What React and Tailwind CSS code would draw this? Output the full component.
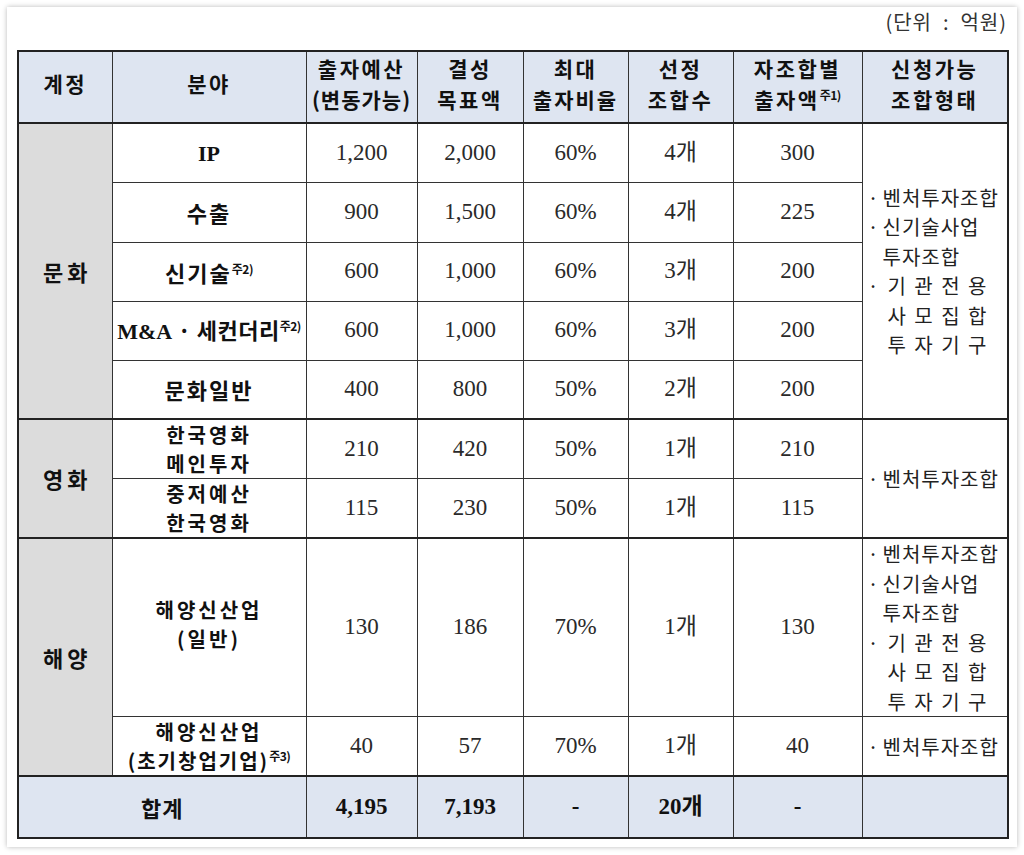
import React from "react";

const SANS = "font-['Noto_Sans_CJK_KR','Noto_Sans',sans-serif]";
const NUM = "font-['Liberation_Serif','Noto_Sans_CJK_KR',serif]";

function Sup({ children }) {
  return (
    <span className="relative -top-[8px] inline-block text-[12px] leading-none font-bold font-['Noto_Sans_CJK_KR',sans-serif] tracking-[-0.5px]">
      {children}
    </span>
  );
}

function Th({ children, className = "" }) {
  return (
    <td
      className={
        "border border-[#333] bg-[#dee5f1] p-0 text-center align-middle text-[21px] leading-[30.5px] font-bold text-[#111] tracking-[2.5px] " +
        SANS +
        " " +
        className
      }
    >
      <div className="pb-[7px]">{children}</div>
    </td>
  );
}

function Cat({ children, rowSpan, top }) {
  return (
    <td
      rowSpan={rowSpan}
      className={
        "border border-[#333] bg-[#dcdcdc] p-0 text-center align-middle text-[22px] font-bold text-[#111] tracking-[4px] " +
        SANS +
        (top ? " border-t-2 border-t-[#222]" : "")
      }
    >
      <span className="pl-[4px]">{children}</span>
    </td>
  );
}

function Label({ children, top }) {
  return (
    <td
      className={
        "border border-[#333] p-0 text-center align-middle text-[22px] leading-[28px] font-bold text-[#111] tracking-[2px] " +
        SANS +
        (top ? " border-t-2 border-t-[#222]" : "")
      }
    >
      {children}
    </td>
  );
}

function Two({ a, b, pb }) {
  return (
    <div className={"text-[20px] leading-[29px] tracking-[3px] " + (pb ? "pb-[8px]" : "")}>
      <div>{a}</div>
      <div>{b}</div>
    </div>
  );
}

function Num({ children, top, bold }) {
  return (
    <td
      className={
        "border border-[#333] p-0 text-center align-middle text-[23px] text-[#2a2a2a] " +
        NUM +
        (bold ? " font-bold text-[#111]" : "") +
        (top ? " border-t-2 border-t-[#222]" : "")
      }
    >
      {children}
    </td>
  );
}

function Line({ bullet, children }) {
  return (
    <div className="flex items-center">
      <span className="w-[15px] shrink-0 text-left tracking-normal">{bullet ? "·" : ""}</span>
      <span>{children}</span>
    </div>
  );
}

function Spaced({ text }) {
  return (
    <div className="flex w-[104px] justify-between pl-[5px] tracking-normal">
      {text.split("").map((c, i) => (
        <span key={i}>{c}</span>
      ))}
    </div>
  );
}

function TypesFull() {
  return (
    <div className="flex flex-col items-start pl-[5px] text-[20px] leading-[29.5px] text-[#222] tracking-[1px]">
      <Line bullet>벤처투자조합</Line>
      <Line bullet>신기술사업</Line>
      <Line>투자조합</Line>
      <div className="flex items-center">
        <span className="w-[15px] shrink-0 text-left">·</span>
        <Spaced text="기관전용" />
      </div>
      <div className="flex items-center">
        <span className="w-[15px] shrink-0" />
        <Spaced text="사모집합" />
      </div>
      <div className="flex items-center">
        <span className="w-[15px] shrink-0" />
        <Spaced text="투자기구" />
      </div>
    </div>
  );
}

function Types({ rowSpan, top, full }) {
  return (
    <td
      rowSpan={rowSpan}
      className={
        "border border-[#333] p-0 text-left align-middle " +
        SANS +
        (top ? " border-t-2 border-t-[#222]" : "")
      }
    >
      {full ? (
        <TypesFull />
      ) : (
        <div className="pl-[5px] text-[20px] leading-[29px] text-[#222] tracking-[1px]">
          <Line bullet>벤처투자조합</Line>
        </div>
      )}
    </td>
  );
}

export default function App() {
  return (
    <div className="h-[855px] w-[1024px] bg-white p-[7px]">
      <div className="h-[840px] w-[1010px] bg-white pl-[10px] pr-[10px] pt-[3px] shadow-[0_0_5px_rgba(0,0,0,0.28)]">
        <div
          className={
            "h-[24px] text-right text-[20px] leading-[24px] text-[#333] tracking-[1px] " + SANS
          }
        >
          (단위{"\u00a0\u00a0"}:{"\u00a0\u00a0"}억원)
        </div>
        <div className="h-[16px]" />
        <table className="w-[990px] table-fixed border-collapse border-2 border-[#222]">
          <colgroup>
            <col className="w-[94px]" />
            <col className="w-[194px]" />
            <col className="w-[111px]" />
            <col className="w-[106px]" />
            <col className="w-[105px]" />
            <col className="w-[105px]" />
            <col className="w-[129px]" />
            <col className="w-[146px]" />
          </colgroup>
          <tbody>
            <tr className="h-[72px]">
              <Th>계정</Th>
              <Th>분야</Th>
              <Th>
                출자예산
                <br />
                <span className="tracking-[1px]">(변동가능)</span>
              </Th>
              <Th>
                결성
                <br />
                목표액
              </Th>
              <Th>
                최대
                <br />
                <span className="tracking-[2px]">출자비율</span>
              </Th>
              <Th>
                선정
                <br />
                조합수
              </Th>
              <Th>
                자조합별
                <br />
                출자액<Sup>주1)</Sup>
              </Th>
              <Th>
                신청가능
                <br />
                조합형태
              </Th>
            </tr>

            <tr className="h-[59px]">
              <Cat rowSpan={5} top>
                문화
              </Cat>
              <Label top>
                <span className={NUM + " font-bold text-[22px] tracking-normal"}>IP</span>
              </Label>
              <Num top>1,200</Num>
              <Num top>2,000</Num>
              <Num top>60%</Num>
              <Num top>4개</Num>
              <Num top>300</Num>
              <Types rowSpan={5} top full />
            </tr>
            <tr className="h-[60px]">
              <Label>수출</Label>
              <Num>900</Num>
              <Num>1,500</Num>
              <Num>60%</Num>
              <Num>4개</Num>
              <Num>225</Num>
            </tr>
            <tr className="h-[59px]">
              <Label>
                신기술<Sup>주2)</Sup>
              </Label>
              <Num>600</Num>
              <Num>1,000</Num>
              <Num>60%</Num>
              <Num>3개</Num>
              <Num>200</Num>
            </tr>
            <tr className="h-[59px]">
              <Label>
                <span className="tracking-[0.5px]">
                  <span className={NUM + " font-bold tracking-normal"}>M&amp;A</span> · 세컨더리
                  <Sup>주2)</Sup>
                </span>
              </Label>
              <Num>600</Num>
              <Num>1,000</Num>
              <Num>60%</Num>
              <Num>3개</Num>
              <Num>200</Num>
            </tr>
            <tr className="h-[59px]">
              <Label>문화일반</Label>
              <Num>400</Num>
              <Num>800</Num>
              <Num>50%</Num>
              <Num>2개</Num>
              <Num>200</Num>
            </tr>

            <tr className="h-[59px]">
              <Cat rowSpan={2} top>
                영화
              </Cat>
              <Label top>
                <Two a="한국영화" b="메인투자" />
              </Label>
              <Num top>210</Num>
              <Num top>420</Num>
              <Num top>50%</Num>
              <Num top>1개</Num>
              <Num top>210</Num>
              <Types rowSpan={2} top />
            </tr>
            <tr className="h-[59px]">
              <Label>
                <Two a="중저예산" b="한국영화" />
              </Label>
              <Num>115</Num>
              <Num>230</Num>
              <Num>50%</Num>
              <Num>1개</Num>
              <Num>115</Num>
            </tr>

            <tr className="h-[176px]">
              <Cat rowSpan={2} top>
                해양
              </Cat>
              <Label top>
                <Two a="해양신산업" b="(일반)" pb />
              </Label>
              <Num top>130</Num>
              <Num top>186</Num>
              <Num top>70%</Num>
              <Num top>1개</Num>
              <Num top>130</Num>
              <Types top full />
            </tr>
            <tr className="h-[59px]">
              <Label>
                <Two
                  a="해양신산업"
                  b={
                    <span className="tracking-[2px]">
                      (초기창업기업)<Sup>주3)</Sup>
                    </span>
                  }
                />
              </Label>
              <Num>40</Num>
              <Num>57</Num>
              <Num>70%</Num>
              <Num>1개</Num>
              <Num>40</Num>
              <Types />
            </tr>

            <tr className="h-[62px] bg-[#dee5f1]">
              <td
                colSpan={2}
                className={
                  "border border-[#333] border-t-2 border-t-[#222] p-0 text-center align-middle text-[22px] font-bold text-[#111] tracking-[1px] " +
                  SANS
                }
              >
                합계
              </td>
              <Num top bold>
                4,195
              </Num>
              <Num top bold>
                7,193
              </Num>
              <Num top bold>
                -
              </Num>
              <Num top bold>
                20개
              </Num>
              <Num top bold>
                -
              </Num>
              <td className="border border-[#333] border-t-2 border-t-[#222] p-0" />
            </tr>
          </tbody>
        </table>
      </div>
    </div>
  );
}
